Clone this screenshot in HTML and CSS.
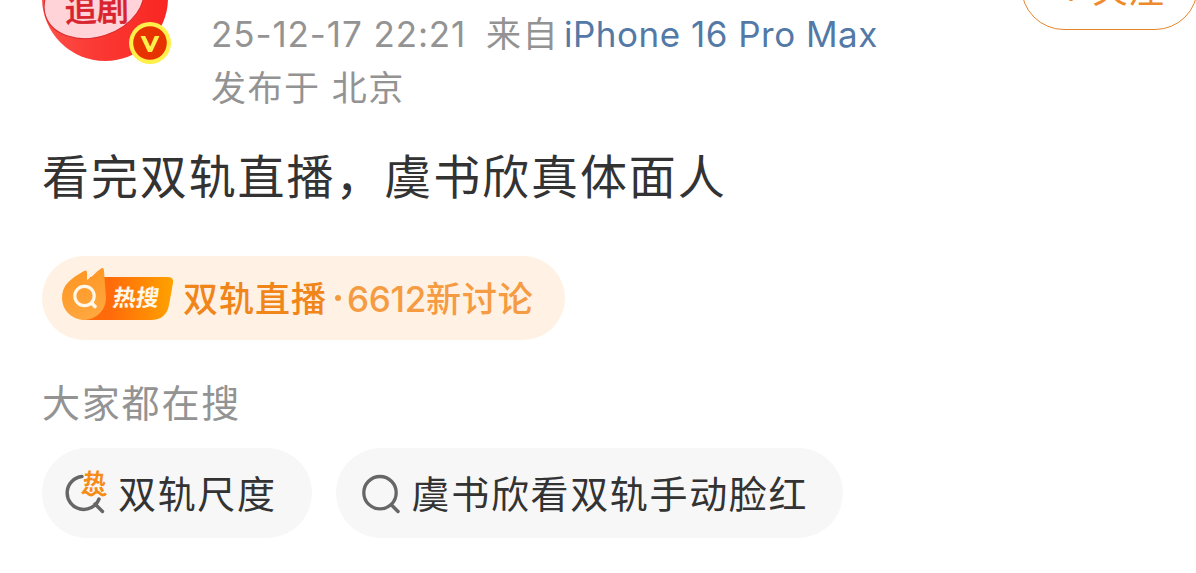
FILE: index.html
```
<!DOCTYPE html>
<html lang="zh-CN">
<head>
    <meta charset="UTF-8">
    <meta name="viewport" content="width=device-width, initial-scale=1.0">
    <title>微博正文</title>
    <link rel="stylesheet" href="styles.css">
</head>

<body>
    <article class="post">
        <header class="post-header">
            <svg class="avatar" viewBox="0 0 130 66">
                <defs>
                    <linearGradient id="avatar-red" x1="0" x2="1">
                        <stop offset="0%" stop-color="#ff5049" />
                        <stop offset="40%" stop-color="#fb3a35" />
                        <stop offset="100%" stop-color="#f92622" />
                    </linearGradient>
                    <clipPath id="avatar-clip"><circle cx="63" cy="-2" r="63" /></clipPath>
                </defs>
                <circle cx="63" cy="-2" r="63" fill="url(#avatar-red)" />
                <g clip-path="url(#avatar-clip)">
                    <ellipse cx="52" cy="0" rx="51" ry="37" fill="#ffd3d8" stroke="#d92b2d" stroke-width="1" transform="rotate(-18 52 0)" />
                    <text class="avatar-text" x="23" y="22" transform="rotate(-1 22 22)">追剧</text>
                </g>
                <circle cx="108" cy="43" r="21" fill="#fff04a" />
                <circle cx="108" cy="43" r="16.8" fill="#e63300" />
                <path d="M98.500 36 h4.700 l5 10.500 4.500 -10.500 h4.800 l-7.500 16 h-4 Z" fill="#fff04a" />
            </svg>
            <div class="meta">
                <div class="meta-line"><span class="time">25-12-17 22:21</span><span class="from">来自</span><a class="device">iPhone 16 Pro Max</a></div>
                <div class="meta-line">发布于 北京</div>
            </div>
            <div class="follow">
                <svg class="plus" viewBox="0 0 20 28"><path d="M10 2 V26 M0 14 H20" stroke="#ee8a2c" stroke-width="3.200" /></svg>
                关注
            </div>
        </header>

        <p class="content">看完双轨直播，虞书欣真体面人</p>

        <div class="hot">
            <svg class="hot-icon" viewBox="0 0 114 56">
                <defs>
                    <linearGradient id="tag" x1="0" x2="1">
                        <stop offset="30%" stop-color="#ff6a0a" />
                        <stop offset="100%" stop-color="#ffa200" />
                    </linearGradient>
                    <linearGradient id="flame" x1="0" y1="0" x2="0.3" y2="1">
                        <stop offset="0%" stop-color="#ff9420" />
                        <stop offset="100%" stop-color="#ffa63d" />
                    </linearGradient>
                </defs>
                <path d="M30 10 H108 Q114 10 113 16 L109 38 Q106 53 91 53 H22 Z" fill="url(#tag)" />
                <path d="M2 31 C2 18 10 12 24 4 Q27 2.500 27 5.500 V13 C32 10 36 5 41 1.500 Q44 0 44 4 L46 31 A22 22 0 0 1 2 31 Z" fill="url(#flame)" />
                <circle cx="24.500" cy="29" r="9.700" fill="none" stroke="#fff7e8" stroke-width="3.200" />
                <path d="M31.500 36 L35 39.500" stroke="#fff7e8" stroke-width="3.600" stroke-linecap="round" />
                <text class="hot-icon-text" transform="translate(52 39) skewX(-8)">热搜</text>
            </svg>
            <span class="hot-topic">双轨直播</span>
            <span class="hot-dot"></span>
            <span class="hot-count"><span class="number">6612</span>新讨论</span>
        </div>

        <h2 class="label">大家都在搜</h2>
        <div class="chips">
            <div class="chip">
                <svg class="chip-icon" viewBox="0 0 42 46">
                    <path d="M18 6.500 A16.500 16.500 0 1 0 35 29 M31 34 L38.500 41.500" fill="none" stroke="#666" stroke-width="3.400" stroke-linecap="round" />
                    <text class="chip-icon-text" transform="translate(18 20) skewX(-6)">热</text>
                    <path d="M18 23.500 q3 -3 6 0 t6 0 t6 0 t6 0" fill="none" stroke="#f68b16" stroke-width="2.600" />
                </svg>
                <span class="chip-text">双轨尺度</span>
            </div>
            <div class="chip">
                <svg class="chip-icon" viewBox="0 0 42 46">
                    <circle cx="22" cy="22.700" r="16.200" fill="none" stroke="#666" stroke-width="3.300" />
                    <path d="M33.500 35 L40 41.500" stroke="#666" stroke-width="3.500" stroke-linecap="round" />
                </svg>
                <span class="chip-text">虞书欣看双轨手动脸红</span>
            </div>
        </div>
    </article>
</body>

</html>
```
FILE: styles.css
```
html, body {
    margin: 0;
    height: 100%;
    background: #fff;
    overflow: hidden;
}

body {
    font-family: Inter, "Noto Sans CJK SC", sans-serif;
    color: #333;
}

.post {
    padding-left: 42px;
}

.post-header {
    display: flex;
    align-items: flex-start;
    height: 120px;
}

.avatar {
    flex: none;
    width: 130px;
    height: 66px;
}

.avatar-text {
    font-size: 32px;
    font-weight: 500;
    fill: #d9232e;
    stroke: #d9232e;
    stroke-width: 0.5px;
}

.meta {
    flex: 1;
    margin-left: 39px;
    padding-top: 7px;
    color: #939393;
    font-size: 35px;
    letter-spacing: 1.5px;
    line-height: 54px;
    white-space: nowrap;
}

.meta-line {
    height: 54px;
}

.time {
    display: inline-block;
    width: 275px;
    letter-spacing: 0.9px;
}

.from {
    display: inline-block;
    width: 78px;
}

.device {
    color: #5379a6;
    letter-spacing: 0.5px;
}

/* scrolled partly past the top edge */
.follow {
    flex: none;
    display: flex;
    justify-content: center;
    align-items: center;
    box-sizing: border-box;
    width: 177px;
    height: 86px;
    margin-top: -56px;
    margin-right: -2px;
    padding-left: 6px;
    border: 1.5px solid #e6852b;
    border-radius: 43px;
    color: #ee8a2c;
    font-size: 36px;
}

.plus {
    width: 20px;
    height: 28px;
    margin: 4px 11px 0 0;
}

.content {
    margin: 22px 0 0;
    font-size: 47px;
    letter-spacing: 1.9px;
    line-height: 70px;
}

.hot {
    display: flex;
    align-items: center;
    box-sizing: border-box;
    width: 523px;
    height: 84px;
    margin-top: 44px;
    padding-left: 18px;
    border-radius: 42px;
    background: #fff1e3;
    font-size: 35px;
    font-weight: 500;
    white-space: nowrap;
}

.hot-icon {
    flex: none;
    width: 114px;
    height: 56px;
    margin-bottom: 6px;
}

.hot-icon-text {
    font-size: 23px;
    font-weight: bold;
    fill: #fff7e8;
}

.hot-topic {
    margin: 0 0 4px 9px;
    color: #f08519;
    letter-spacing: 1px;
}

.hot-dot {
    width: 6px;
    height: 6px;
    margin: 0 6px 0 8px;
    border-radius: 50%;
    background: #f39a3f;
}

.hot-count {
    margin-bottom: 4px;
    color: #f59b41;
    letter-spacing: 0.9px;
}

.number {
    letter-spacing: -0.3px;
}

.label {
    margin: 35px 0 0;
    color: #939393;
    font-size: 38px;
    font-weight: normal;
    letter-spacing: 1.8px;
    line-height: 56px;
}

.chips {
    display: flex;
    gap: 24px;
    margin-top: 17px;
}

.chip {
    display: flex;
    align-items: center;
    height: 90px;
    padding: 0 35px 0 22px;
    border-radius: 45px;
    background: #f7f7f7;
    font-size: 38px;
    letter-spacing: 1.65px;
    white-space: nowrap;
}

.chip-icon {
    flex: none;
    width: 42px;
    height: 46px;
    margin-right: 12px;
    overflow: visible;
}

.chip-text {
    margin-bottom: 4px;
}

.chip-icon-text {
    font-size: 23px;
    font-weight: bold;
    fill: #f68b16;
}
```
